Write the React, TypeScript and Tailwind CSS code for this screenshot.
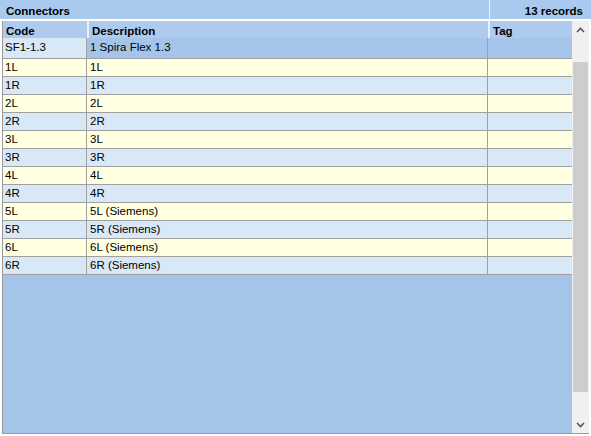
import React from 'react'

type Connector = { code: string; description: string; tag: string }

const connectors: Connector[] = [
  { code: 'SF1-1.3', description: '1 Spira Flex 1.3', tag: '' },
  { code: '1L', description: '1L', tag: '' },
  { code: '1R', description: '1R', tag: '' },
  { code: '2L', description: '2L', tag: '' },
  { code: '2R', description: '2R', tag: '' },
  { code: '3L', description: '3L', tag: '' },
  { code: '3R', description: '3R', tag: '' },
  { code: '4L', description: '4L', tag: '' },
  { code: '4R', description: '4R', tag: '' },
  { code: '5L', description: '5L (Siemens)', tag: '' },
  { code: '5R', description: '5R (Siemens)', tag: '' },
  { code: '6L', description: '6L (Siemens)', tag: '' },
  { code: '6R', description: '6R (Siemens)', tag: '' },
]

const Chevron = ({ up }: { up?: boolean }) => (
  <svg width="9" height="6" viewBox="0 0 9 6" className="text-[#555]">
    <path
      d={up ? 'M1 5 L4.5 1.5 L8 5' : 'M1 1 L4.5 4.5 L8 1'}
      fill="none"
      stroke="currentColor"
      strokeWidth="1.6"
    />
  </svg>
)

export default function App() {
  return (
    <div className="flex h-[436px] w-[591px] flex-col bg-white font-['Liberation_Sans',sans-serif] text-[11.5px] text-black">
      {/* title strip */}
      <div className="flex h-[19px] shrink-0 bg-[#a9c9ef] font-bold">
        <div className="flex-1 px-[6px] pt-[3px]">Connectors</div>
        <div className="w-[102px] border-l border-[#e6f0fb] pr-[8px] pt-[3px] text-right">
          13 records
        </div>
      </div>
      <div className="h-[2px] shrink-0 bg-white" />

      {/* grid */}
      <div className="ml-[2px] mr-[2px] mb-[2px] flex min-h-0 flex-1 border-b border-l border-[#9a9a9a]">
        <div className="flex min-w-0 flex-1 flex-col bg-[#a5c4ea]">
          <div className="grid h-[17px] shrink-0 grid-cols-[84px_401px_84px] bg-[#aecbee] font-bold">
            <div className="px-[3px] pt-[2px]">Code</div>
            <div className="border-l-2 border-[#e8f1fc] px-[3px] pt-[2px]">Description</div>
            <div className="border-l-2 border-[#e8f1fc] px-[3px] pt-[2px]">Tag</div>
          </div>
          {connectors.map((c, i) => {
            const selected = i === 0
            const stripe = i % 2 === 1 ? 'bg-[#ffffe1]' : 'bg-[#d8e8f7]'
            return (
              <div
                key={c.code}
                className={`grid grid-cols-[84px_401px_84px] border-b border-[#a0a0a0] ${selected ? 'h-[21px]' : 'h-[18px]'}`}
              >
                <div className={`flex items-center border-r border-[#a0a0a0] px-[2px] ${stripe}`}>
                  {c.code}
                </div>
                <div
                  className={`flex items-center border-r border-[#a0a0a0] px-[3px] ${selected ? 'bg-[#a5c4ea]' : stripe}`}
                >
                  {c.description}
                </div>
                <div className={`flex items-center px-[3px] ${selected ? 'bg-[#a5c4ea]' : stripe}`}>
                  {c.tag}
                </div>
              </div>
            )
          })}
        </div>

        {/* vertical scrollbar */}
        <div className="flex w-[17px] shrink-0 flex-col bg-[#f0f0f0]">
          <div className="flex h-[17px] items-center justify-center">
            <Chevron up />
          </div>
          <div className="h-[24px]" />
          <div className="mx-[1px] flex-1 bg-[#cdcdcd]" />
          <div className="h-[24px]" />
          <div className="flex h-[17px] items-center justify-center">
            <Chevron />
          </div>
        </div>
      </div>
    </div>
  )
}
